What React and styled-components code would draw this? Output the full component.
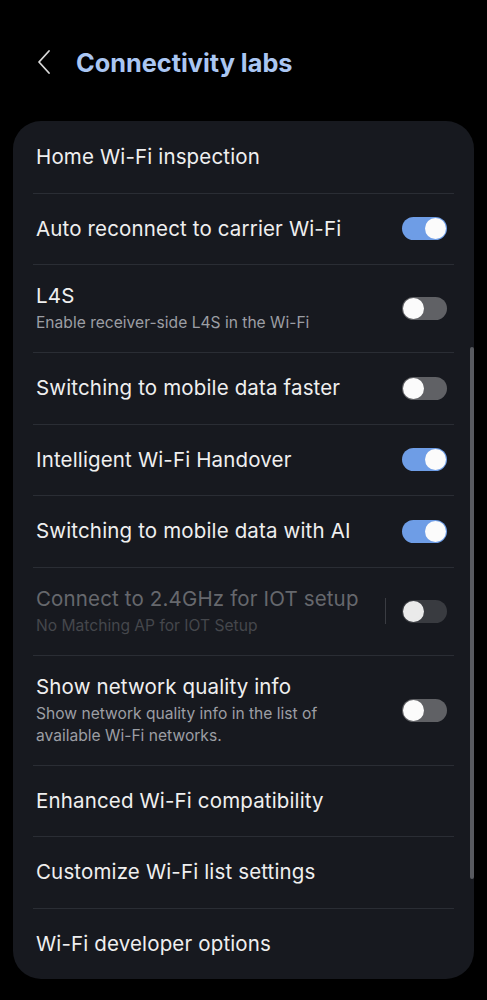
import React from 'react';
import styled, { createGlobalStyle } from 'styled-components';

const Global = createGlobalStyle`
  html, body {
    margin: 0;
    padding: 0;
    background: #000;
  }
  body {
    font-family: Inter, Roboto, "Noto Sans", sans-serif;
    -webkit-font-smoothing: antialiased;
  }
`;

const Page = styled.div`
  width: 487px;
  min-height: 1000px;
  background: #000;
  padding-bottom: 22px;
  box-sizing: border-box;
`;

const Header = styled.div`
  display: flex;
  align-items: center;
  height: 32px;
  padding: 46px 0 43px 36px;
  gap: 22px;
`;

const Back = styled.button`
  background: none;
  border: none;
  padding: 0;
  display: flex;
  align-items: center;
  width: 18px;
  height: 26px;
  cursor: pointer;
`;

const Title = styled.h1`
  margin: 0;
  font-size: 25.3px;
  font-weight: 700;
  color: #aac6f2;
`;

const Card = styled.div`
  position: relative;
  margin: 0 13px;
  background: #17191f;
  border-radius: 28px;
  padding: 0 20px;
`;

const Scrollbar = styled.div`
  position: absolute;
  right: 0;
  top: 226px;
  width: 4px;
  height: 532px;
  border-radius: 2px;
  background: #585a60;
`;

const Row = styled.div`
  display: flex;
  align-items: center;
  min-height: 71.5px;
  padding: 18px 7px 18px 3px;
  box-sizing: border-box;
  border-top: ${p => (p.$first ? 'none' : '1.5px solid #2a2d34')};
`;

const Texts = styled.div`
  flex: 1;
  display: flex;
  flex-direction: column;
`;

const Label = styled.div`
  font-size: 20.5px;
  line-height: 26px;
  letter-spacing: 0.15px;
  color: ${p => (p.$disabled ? '#66686d' : '#efefef')};
`;

const Sub = styled.div`
  margin-top: 3px;
  font-size: 15.6px;
  line-height: 22px;
  color: ${p => (p.$disabled ? '#45474c' : '#9c9ea4')};
  max-width: 300px;
`;

const Bar = styled.div`
  width: 1.5px;
  height: 26px;
  background: #3a3c42;
  margin: 0 16px 0 8px;
`;

const Track = styled.div`
  position: relative;
  width: 45px;
  height: 23px;
  border-radius: 12px;
  flex-shrink: 0;
  background: ${p => (p.$on ? '#6e9de6' : p.$disabled ? '#393b40' : '#606165')};
`;

const Thumb = styled.div`
  position: absolute;
  top: 1px;
  left: ${p => (p.$on ? '23px' : '1px')};
  width: 21px;
  height: 21px;
  border-radius: 50%;
  background: ${p => (p.$disabled ? '#eaeaea' : '#fbfbfb')};
`;

const Toggle = ({ on, disabled }) => (
  <Track $on={on} $disabled={disabled}>
    <Thumb $on={on} $disabled={disabled} />
  </Track>
);

const items = [
  { title: 'Home Wi-Fi inspection' },
  { title: 'Auto reconnect to carrier Wi-Fi', toggle: true, on: true },
  { title: 'L4S', sub: 'Enable receiver-side L4S in the Wi-Fi', toggle: true },
  { title: 'Switching to mobile data faster', toggle: true },
  { title: 'Intelligent Wi-Fi Handover', toggle: true, on: true },
  { title: 'Switching to mobile data with AI', toggle: true, on: true },
  {
    title: 'Connect to 2.4GHz for IOT setup',
    sub: 'No Matching AP for IOT Setup',
    toggle: true,
    disabled: true,
    bar: true,
  },
  {
    title: 'Show network quality info',
    sub: 'Show network quality info in the list of available Wi-Fi networks.',
    toggle: true,
  },
  { title: 'Enhanced Wi-Fi compatibility' },
  { title: 'Customize Wi-Fi list settings' },
  { title: 'Wi-Fi developer options' },
];

export default function App() {
  return (
    <Page>
      <Global />
      <Header>
        <Back aria-label="Back">
          <svg width="16" height="26" viewBox="0 0 16 26" fill="none">
            <path d="M13 2 L3 13 L13 24" stroke="#d8d8d8" strokeWidth="1.8" strokeLinecap="round" strokeLinejoin="round" />
          </svg>
        </Back>
        <Title>Connectivity labs</Title>
      </Header>
      <Card>
        {items.map((it, i) => (
          <Row key={it.title} $first={i === 0}>
            <Texts>
              <Label $disabled={it.disabled}>{it.title}</Label>
              {it.sub && <Sub $disabled={it.disabled}>{it.sub}</Sub>}
            </Texts>
            {it.bar && <Bar />}
            {it.toggle && <Toggle on={it.on} disabled={it.disabled} />}
          </Row>
        ))}
        <Scrollbar />
      </Card>
    </Page>
  );
}
